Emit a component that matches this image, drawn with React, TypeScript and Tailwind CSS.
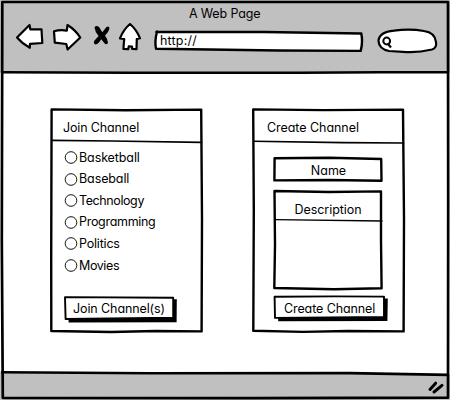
import type { ReactNode } from "react";

type SketchProps = { w: number; h: number; children: ReactNode };

/** Hand-drawn strokes that decorate the element they sit in. */
function Sketch({ w, h, children }: SketchProps) {
  return (
    <svg
      aria-hidden="true"
      className="pointer-events-none absolute inset-0 overflow-visible"
      width={w}
      height={h}
      viewBox={`0 0 ${w} ${h}`}
      fill="none"
      stroke="#000"
      strokeWidth="2.4"
      strokeLinejoin="round"
      strokeLinecap="round"
    >
      {children}
    </svg>
  );
}

const channels = [
  { name: "Basketball", fit: "tracking-[-0.1px]" },
  { name: "Baseball", fit: "tracking-[-0.1px]" },
  { name: "Technology", fit: "tracking-[-0.4px]" },
  { name: "Programming", fit: "tracking-[-0.3px]" },
  { name: "Politics", fit: "tracking-[-0.2px]" },
  { name: "Movies", fit: "tracking-[-0.4px]" },
];

function Toolbar() {
  return (
    <header className="relative h-[72px] bg-[#c0c0c0]">
      <h1 className="h-[28px] pl-[189px] text-[12.5px] leading-[27px] tracking-[-0.15px]">A Web Page</h1>
      <div className="flex items-start">
        <svg className="ml-[16px] -mt-[5px] shrink-0" width="127" height="30" viewBox="16 23 127 30" fill="#fff" stroke="#000" strokeWidth="2.2" strokeLinejoin="round">
          <path d="M17 37.5 L29.5 25 L30.3 29.3 L41.5 29.3 L42.3 43 L30 43.8 L29.8 47.8 Q22 43.5 17 37.5Z" />
          <path d="M54 31.3 Q60 29.5 66.8 30.6 L67.5 25 Q75 29.5 80.3 37.5 L67.6 49.5 L66.3 44 L54.8 42.7Z" />
          <path fill="#000" stroke="none" d="M94.5 27.5 Q96 25 99 27 L102.3 32.3 L106.5 27 Q109 25.5 109.5 28 Q109 31.5 105 35.5 Q107.8 39 108 43 Q106 45.5 104.3 43 L101.2 39.3 Q98.5 44 95.5 44.5 Q93 43.5 94.3 40.7 L98.6 36 Q95 32 94.5 27.5Z" />
          <path d="M130 24 Q136.5 29.5 140 38.3 L136.8 39 L136.5 49.2 L132.2 49 L132 46.5 L128.8 46.3 L128.2 49.2 L123.4 49 L124.2 39 L120 38.4 Q123.5 29.5 130 24Z" />
        </svg>
        <div className="relative ml-[11px] mt-[2px] h-[22px] w-[209px] shrink-0 text-[12.5px] leading-[21px]">
          <Sketch w={209} h={22}>
            <path fill="#fff" stroke="none" d="M3 1 L110 1.3 L208 3.2 Q209 12 206.5 21 L120 21 L2 18.8 Q0 11 3 1Z" />
            <path d="M2.3 2 L110 2 L207.3 3.5 Q209 12 206.7 20.9 L125 20.5 L2 18.7 Q.5 11 3 1.5" />
          </Sketch>
          <span className="relative pl-[6px] tracking-[0.2px]">http://</span>
        </div>
        <svg className="ml-[14px] shrink-0 overflow-visible" width="61" height="26" viewBox="377 28 61 26" fill="#fff" stroke="#000" strokeWidth="2.2">
          <path d="M389 51 Q379 49 378.5 41 Q379 32 394 30.6 Q410 28.6 424 31 Q435 32.5 436 42 Q437 48 432 49.5 Q417 53 403 51.8 L389 51Z" />
          <circle cx="386.7" cy="41" r="3.4" strokeWidth="2" />
          <path d="M388.5 44.5 L391 47.5" strokeWidth="2.2" />
        </svg>
      </div>
      <Sketch w={450} h={72}>
        <path strokeWidth="2.6" d="M2 72.2 L130 72.7 L300 72.7 L380 72.3 L448 72.3" />
      </Sketch>
    </header>
  );
}

function JoinPanel() {
  return (
    <section className="relative h-[223px] w-[151px]">
      <Sketch w={151} h={223}>
        <path d="M.6 .4 L75 1.2 L150.2 .6 L151 110 L150.6 222.4 L105 222 L60 223 L.3 222 L.2 150 L.6 .4" />
        <path strokeWidth="1.7" d="M.8 31.3 L60 32 L150.5 33.3" />
      </Sketch>
      <h2 className="h-[38px] pl-[12px] pt-[8px] text-[12.5px] leading-[21px] tracking-[-0.15px]">Join Channel</h2>
      <ul className="flex flex-col pl-[13px]">
        {channels.map((channel) => (
          <li key={channel.name} className="flex h-[21.55px] items-center">
            <svg className="mr-[1px] shrink-0" width="14" height="13" viewBox="0 0 14 13" fill="#fff" stroke="#111" strokeWidth="1">
              <circle cx="7" cy="6.5" r="5.8" />
            </svg>
            <span className={`text-[12.5px] leading-[20px] ${channel.fit}`}>{channel.name}</span>
          </li>
        ))}
      </ul>
      <button className="relative ml-[14px] mt-[21px] block h-[24px] w-[110px] text-left text-[12.5px] leading-[22px]">
        <Sketch w={110} h={24}>
          <path fill="#000" stroke="none" d="M3.2 3 L111.8 2.2 L111.6 25.2 L3.6 25.5Z" />
          <path fill="#fff" strokeWidth="1.9" d="M0 .1 L108.2 .8 L108.2 20.6 L.6 22Z" />
        </Sketch>
        <span className="relative pl-[8px] tracking-[-0.1px]">Join Channel(s)</span>
      </button>
    </section>
  );
}

function CreatePanel() {
  return (
    <section className="relative h-[223px] w-[151px]">
      <Sketch w={151} h={223}>
        <path d="M.2 .4 L70 1.1 L150 .6 L151 110 L150.6 222.4 L95 222 L50 222.9 L.3 221.8 L.8 100 L.2 .4" />
        <path strokeWidth="1.6" d="M.8 32.3 L90 33.6 L150.5 34" />
      </Sketch>
      <h2 className="h-[48px] pl-[14px] pt-[8px] text-[12.5px] leading-[21px] tracking-[-0.05px]">Create Channel</h2>
      <div className="flex flex-col pl-[21px]">
        <div className="relative h-[25px] w-[108px] text-center text-[12.5px] leading-[28px]">
          <Sketch w={108} h={25}>
            <path d="M.6 1.2 L55 .8 L107.2 2 L107.5 23.8 L55 23 L.4 23.4Z" />
          </Sketch>
          <span className="relative pl-[1px]">Name</span>
        </div>
        <div className="relative mt-[8px] h-[99px] w-[108px] pt-[7px] text-center text-[12.5px] leading-[26px]">
          <Sketch w={108} h={99}>
            <path d="M.5 1 L55 2 L107 1.4 L107 50 L107.6 98.2 L60 99.3 L.3 98 L1 55Z" />
            <path strokeWidth="1.4" d="M.8 29.6 L108 31" />
          </Sketch>
          <span className="relative tracking-[-0.05px]">Description</span>
        </div>
        <button className="relative mt-[7px] block h-[24px] w-[111px] text-left text-[12.5px] leading-[25px]">
          <Sketch w={111} h={24}>
            <path fill="#000" stroke="none" d="M3.8 3 L113.8 2.4 L113.4 24.9 L4.2 25.2Z" />
            <path fill="#fff" strokeWidth="1.9" d="M.6 .8 L60 .4 L110 .6 L110 20.9 L1 21.9Z" />
          </Sketch>
          <span className="relative pl-[10px] tracking-[-0.1px]">Create Channel</span>
        </button>
      </div>
    </section>
  );
}

export default function App() {
  return (
    <div className="relative flex h-[400px] w-[450px] flex-col overflow-hidden bg-white font-['Inter','Lato',sans-serif] text-black [font-feature-settings:'cv11']">
      <Toolbar />
      <main className="flex flex-1 gap-[51px] pl-[51px] pt-[37px]">
        <JoinPanel />
        <CreatePanel />
      </main>
      <footer className="relative h-[27px] bg-[#c0c0c0]">
        <Sketch w={450} h={27}>
          <path fill="#fff" stroke="none" d="M0 0 L450 0 L450 2 L350 0Z" />
          <path strokeWidth="2.6" d="M2 -.7 L150 .2 L350 .1 L448 1.9" />
          <path strokeWidth="3" d="M430 16.4 L435.6 10.2 M434 19 L442 12.4" />
        </Sketch>
      </footer>
      <Sketch w={450} h={400}>
        <path strokeWidth="2.7" d="M2.3 2 L448 2 L448.2 200 L448 397.7 L250 398.2 L2.8 397.8 L1.8 240 L2.3 2" />
      </Sketch>
    </div>
  );
}
